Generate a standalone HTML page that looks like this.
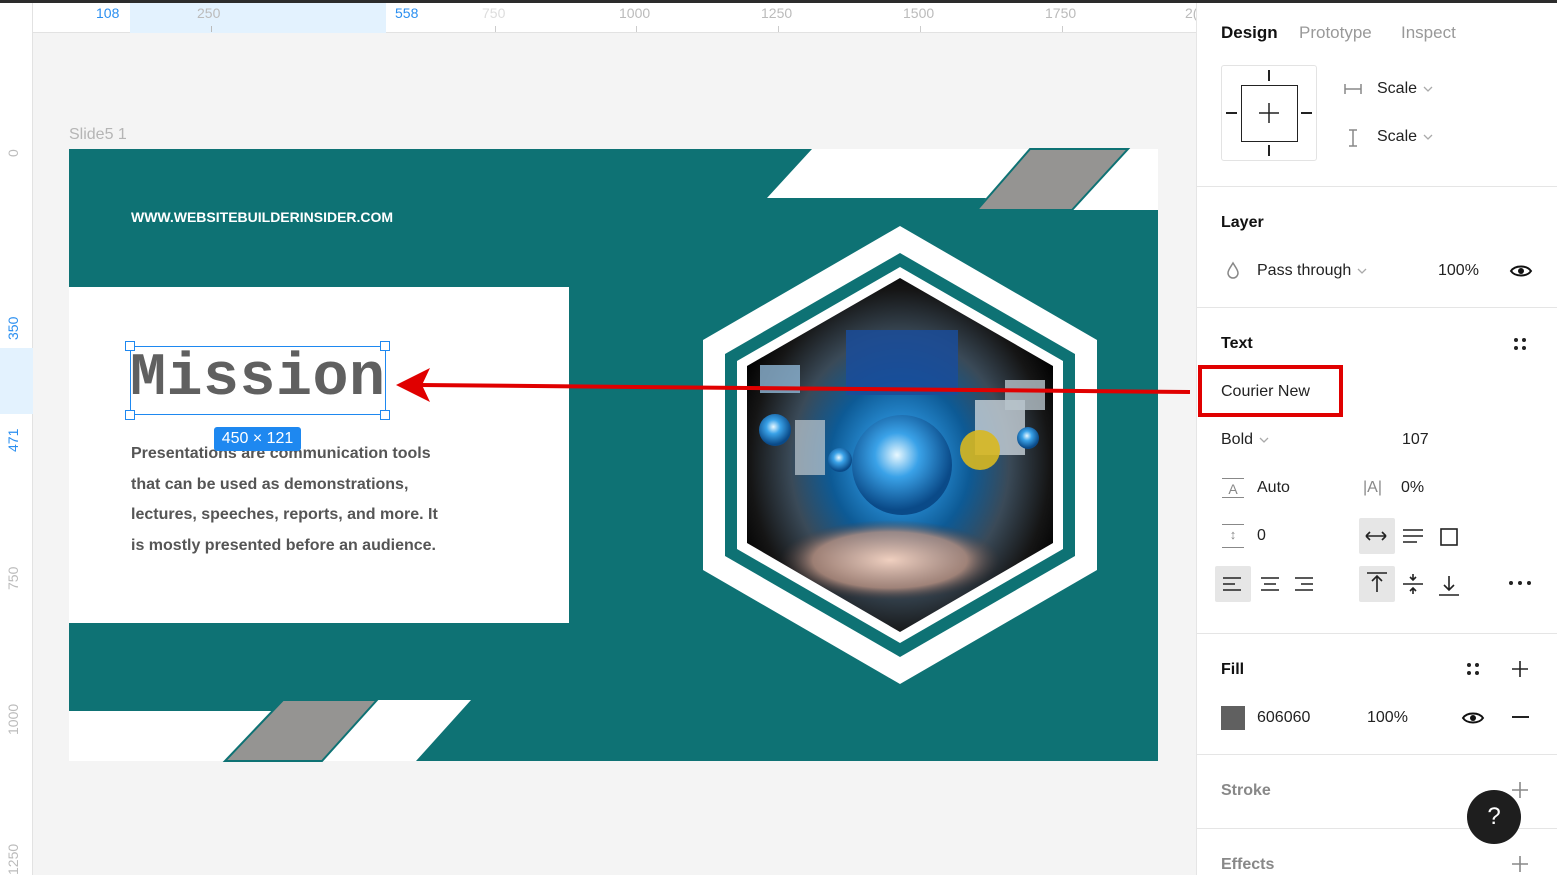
<!DOCTYPE html>
<html><head><meta charset="utf-8"><style>
*{margin:0;padding:0;box-sizing:border-box}
body{width:1557px;height:875px;overflow:hidden;background:#f4f4f4;font-family:"Liberation Sans",sans-serif;position:relative}
.a{position:absolute;white-space:nowrap}
.p{font-size:16px;color:#222}
.g{color:#999}
.sec{font-weight:bold;font-size:16px;color:#111}
.hr{position:absolute;left:1197px;width:360px;height:1px;background:#e5e5e5}
.rt{font-size:14px;color:#bbb}
.ch{display:inline-block;width:10px;height:8px;margin-left:6px;vertical-align:middle}
</style></head><body>
<div class="a" style="left:0;top:0;width:1557px;height:3px;background:#2c2c2c"></div>
<div class="a" style="left:0;top:3px;width:1197px;height:30px;background:#fff;border-bottom:1px solid #e2e2e2"></div>
<div class="a" style="left:130px;top:3px;width:256px;height:30px;background:#e3f2fe"></div>
<div class="a" style="left:0;top:3px;width:33px;height:872px;background:#fff;border-right:1px solid #e2e2e2"></div>
<div class="a" style="left:0;top:348px;width:33px;height:66px;background:#e3f2fe"></div>
<div class="a" style="left:32px;top:3px;width:1px;height:30px;background:#e2e2e2"></div>
<div class="a rt" style="left:96px;top:5px;color:#2b8ff0">108</div>
<div class="a rt" style="left:197px;top:5px">250</div>
<div class="a rt" style="left:395px;top:5px;color:#2b8ff0">558</div>
<div class="a rt" style="left:482px;top:5px;color:#ddd">750</div>
<div class="a rt" style="left:619px;top:5px">1000</div>
<div class="a rt" style="left:761px;top:5px">1250</div>
<div class="a rt" style="left:903px;top:5px">1500</div>
<div class="a rt" style="left:1045px;top:5px">1750</div>
<div class="a rt" style="left:1185px;top:5px">2(</div>
<div class="a" style="left:211px;top:26px;width:1px;height:6px;background:#bbb"></div>
<div class="a" style="left:495px;top:26px;width:1px;height:6px;background:#ccc"></div>
<div class="a" style="left:636px;top:26px;width:1px;height:6px;background:#ccc"></div>
<div class="a" style="left:778px;top:26px;width:1px;height:6px;background:#ccc"></div>
<div class="a" style="left:920px;top:26px;width:1px;height:6px;background:#ccc"></div>
<div class="a" style="left:1062px;top:26px;width:1px;height:6px;background:#ccc"></div>
<div class="a rt" style="left:5px;transform:rotate(-90deg);transform-origin:0 0;top:157px">0</div>
<div class="a rt" style="left:5px;top:340px;transform:rotate(-90deg);transform-origin:0 0;color:#2b8ff0">350</div>
<div class="a rt" style="left:5px;top:452px;transform:rotate(-90deg);transform-origin:0 0;color:#2b8ff0">471</div>
<div class="a rt" style="left:5px;top:590px;transform:rotate(-90deg);transform-origin:0 0">750</div>
<div class="a rt" style="left:5px;top:735px;transform:rotate(-90deg);transform-origin:0 0">1000</div>
<div class="a rt" style="left:5px;top:875px;transform:rotate(-90deg);transform-origin:0 0">1250</div>

<div class="a" style="left:69px;top:126px;font-size:16px;color:#b5b5b5">Slide5 1</div>

<svg class="a" style="left:0;top:0" width="1197" height="875">
<defs>
<radialGradient id="rg" cx="50%" cy="52%" r="55%">
<stop offset="0" stop-color="#dff4ff"/><stop offset="0.18" stop-color="#2a90d8"/><stop offset="0.4" stop-color="#0d5a95"/><stop offset="0.62" stop-color="#3a4a58"/><stop offset="0.85" stop-color="#151515"/><stop offset="1" stop-color="#000"/></radialGradient>
<radialGradient id="gl" cx="45%" cy="40%" r="55%"><stop offset="0" stop-color="#e8f8ff"/><stop offset="0.4" stop-color="#3aa2e8"/><stop offset="1" stop-color="#0a4a88"/></radialGradient>
<radialGradient id="hd" cx="50%" cy="50%" r="50%"><stop offset="0" stop-color="#f0d0c0"/><stop offset="0.7" stop-color="#b89080" stop-opacity="0.8"/><stop offset="1" stop-color="#503c38" stop-opacity="0"/></radialGradient>
<clipPath id="hc"><polygon points="900,278 1053,366 1053,543 900,632 747,543 747,366"/></clipPath>
</defs>
<rect x="69" y="149" width="1089" height="612" fill="#0e7274"/>
<polygon points="812,149 1158,149 1158,210 977,210 986,198 767,198" fill="#fff"/>
<polygon points="1030,149 1128,149 1072,210 977,210" fill="#959492" stroke="#0e7274" stroke-width="2"/>
<rect x="69" y="287" width="500" height="336" fill="#fff"/>
<polygon points="69,711 273,711 225,761 69,761" fill="#fff"/>
<polygon points="377,700 471,700 416,761 322,761" fill="#fff"/>
<polygon points="283,700 377,700 322,761 225,761" fill="#959492" stroke="#0e7274" stroke-width="2"/>
<polygon points="900,226 1097,340 1097,570 900,684 703,570 703,340" fill="#fff"/>
<polygon points="900,253 1075,354 1075,556 900,657 725,556 725,354" fill="#0e7274"/>
<polygon points="900,267 1063,361 1063,549 900,643 737,549 737,361" fill="#fff"/>
<g clip-path="url(#hc)">
<rect x="740" y="270" width="320" height="370" fill="url(#rg)"/>
<rect x="846" y="330" width="112" height="65" fill="#1a4c9a" opacity="0.85"/>
<rect x="760" y="365" width="40" height="28" fill="#8fb6d6" opacity="0.8"/>
<rect x="975" y="400" width="50" height="55" fill="#c8d2da" opacity="0.8"/>
<rect x="1005" y="380" width="40" height="30" fill="#b8c4cc" opacity="0.8"/>
<rect x="795" y="420" width="30" height="55" fill="#c0cad2" opacity="0.7"/>
<ellipse cx="890" cy="560" rx="110" ry="40" fill="url(#hd)"/>
<circle cx="902" cy="465" r="50" fill="url(#gl)"/>
<circle cx="775" cy="430" r="16" fill="url(#gl)"/>
<circle cx="840" cy="460" r="12" fill="url(#gl)"/>
<circle cx="1028" cy="438" r="11" fill="url(#gl)"/>
<circle cx="980" cy="450" r="20" fill="#d8b820" opacity="0.9"/>
</g>
<line x1="1190" y1="392" x2="420" y2="385" stroke="#e00000" stroke-width="4"/>
<polygon points="396,385 430,368 422,385 430,402" fill="#e00000"/>
</svg>
<div class="a" style="left:131px;top:209px;font-size:14px;font-weight:bold;color:#fff">WWW.WEBSITEBUILDERINSIDER.COM</div>
<div class="a" style="left:130px;top:346px;width:256px;height:69px;border:1px solid #1e88f0"></div>
<div class="a" style="left:130px;top:344px;font-family:'Liberation Mono',monospace;font-weight:bold;font-size:60px;color:#606060;letter-spacing:0.5px;line-height:70px">Mission</div>
<div class="a" style="left:125px;top:341px;width:10px;height:10px;border:1px solid #1e88f0;background:#fff"></div>
<div class="a" style="left:380px;top:341px;width:10px;height:10px;border:1px solid #1e88f0;background:#fff"></div>
<div class="a" style="left:125px;top:410px;width:10px;height:10px;border:1px solid #1e88f0;background:#fff"></div>
<div class="a" style="left:380px;top:410px;width:10px;height:10px;border:1px solid #1e88f0;background:#fff"></div>
<div class="a" style="left:131px;top:439px;font-size:16px;font-weight:bold;color:#555;line-height:30.5px">Presentations are communication tools<br>that can be used as demonstrations,<br>lectures, speeches, reports, and more. It<br>is mostly presented before an audience.</div>
<div class="a" style="left:214px;top:427px;width:87px;height:24px;background:#1e88f0;border-radius:3px;color:#fff;font-size:16px;text-align:center;line-height:24px">450 × 121</div>

<div class="a" style="left:1196px;top:3px;width:361px;height:872px;background:#fff;border-left:1px solid #e5e5e5"></div>
<div class="a sec" style="left:1221px;top:23px;font-size:17px">Design</div>
<div class="a p g" style="left:1299px;top:23px;font-size:17px">Prototype</div>
<div class="a p g" style="left:1401px;top:23px;font-size:17px">Inspect</div>
<div class="a" style="left:1221px;top:65px;width:96px;height:96px;border:1px solid #e3e3e3;border-radius:3px"></div>
<div class="a" style="left:1241px;top:85px;width:57px;height:57px;border:1px solid #222"></div>
<svg class="a" style="left:1221px;top:65px" width="96" height="96" stroke="#222" stroke-width="2"><line x1="48" y1="5" x2="48" y2="16"/><line x1="48" y1="80" x2="48" y2="91"/><line x1="5" y1="48" x2="16" y2="48"/><line x1="80" y1="48" x2="91" y2="48"/><line x1="48" y1="38" x2="48" y2="58" stroke-width="1.5"/><line x1="38" y1="48" x2="58" y2="48" stroke-width="1.5"/></svg>
<svg class="a" style="left:1343px;top:80px" width="20" height="70" stroke="#888" stroke-width="1.5" fill="none"><path d="M2 4v10M18 4v10M2 9h16"/><path d="M6 50h8M10 50v16M6 66h8"/></svg>
<div class="a p" style="left:1377px;top:80px">Scale<svg class="ch" viewBox="0 0 10 8"><path d="M1 2l4 4 4-4" fill="none" stroke="#aaa" stroke-width="1.3"/></svg></div>
<div class="a p" style="left:1377px;top:128px">Scale<svg class="ch" viewBox="0 0 10 8"><path d="M1 2l4 4 4-4" fill="none" stroke="#aaa" stroke-width="1.3"/></svg></div>
<div class="hr" style="top:186px"></div>
<div class="a sec" style="left:1221px;top:214px">Layer</div>
<svg class="a" style="left:1225px;top:261px" width="16" height="18"><path d="M8 2C5 7 3 9 3 12a5 5 0 0 0 10 0c0-3-2-5-5-10z" fill="none" stroke="#888" stroke-width="1.5"/></svg>
<div class="a p" style="left:1257px;top:262px">Pass through<svg class="ch" viewBox="0 0 10 8"><path d="M1 2l4 4 4-4" fill="none" stroke="#aaa" stroke-width="1.3"/></svg></div>
<div class="a p" style="left:1438px;top:262px">100%</div>
<svg class="a" style="left:1509px;top:262px" width="24" height="18"><path d="M2 9C6 3 18 3 22 9C18 15 6 15 2 9z" fill="none" stroke="#111" stroke-width="2"/><circle cx="12" cy="9" r="3" fill="#111"/></svg>
<div class="hr" style="top:307px"></div>
<div class="a sec" style="left:1221px;top:335px">Text</div>
<svg class="a" style="left:1512px;top:336px" width="16" height="16" fill="#222"><circle cx="4" cy="4" r="2"/><circle cx="12" cy="4" r="2"/><circle cx="4" cy="12" r="2"/><circle cx="12" cy="12" r="2"/></svg>
<div class="a" style="left:1198px;top:365px;width:145px;height:52px;border:4px solid #e00000"></div>
<div class="a p" style="left:1221px;top:383px">Courier New</div>
<div class="a p" style="left:1221px;top:431px">Bold<svg class="ch" viewBox="0 0 10 8"><path d="M1 2l4 4 4-4" fill="none" stroke="#aaa" stroke-width="1.3"/></svg></div>
<div class="a p" style="left:1402px;top:431px">107</div>
<div class="a" style="left:1222px;top:478px;width:22px;height:20px;border-top:1px solid #888;border-bottom:1px solid #888;font-size:14px;color:#888;text-align:center;line-height:20px">A</div>
<div class="a p" style="left:1257px;top:479px">Auto</div>
<div class="a" style="left:1363px;top:479px;font-size:16px;color:#888">|A|</div>
<div class="a p" style="left:1401px;top:479px">0%</div>
<div class="a" style="left:1222px;top:524px;width:22px;height:24px;border-top:1px solid #888;border-bottom:1px solid #888;font-size:13px;color:#888;text-align:center;line-height:20px">↕</div>
<div class="a p" style="left:1257px;top:527px">0</div>
<div class="a" style="left:1359px;top:518px;width:36px;height:36px;background:#e6e6e6;border-radius:2px"></div>
<div class="a" style="left:1215px;top:566px;width:36px;height:36px;background:#e6e6e6;border-radius:2px"></div>
<div class="a" style="left:1359px;top:566px;width:36px;height:36px;background:#e6e6e6;border-radius:2px"></div>
<svg class="a" style="left:1197px;top:510px" width="360" height="100" stroke="#222" stroke-width="1.6" fill="none">
<path d="M169 26h20M169 26l4-4M169 26l4 4M189 26l-4-4M189 26l-4 4"/>
<path d="M206 20h20M206 26h20M206 32h14"/>
<rect x="244" y="19" width="16" height="16"/>
<path d="M26 68h18M26 74h12M26 80h18"/>
<path d="M64 68h18M67 74h12M64 80h18"/>
<path d="M98 68h18M104 74h12M98 80h18"/>
<path d="M170 63h20M180 66v16M175 71l5-5 5 5"/>
<path d="M206 74h20M216 64v6M213 67l3 3 3-3M216 84v-6M213 81l3-3 3 3"/>
<path d="M242 85h20M252 66v14M247 75l5 5 5-5"/>
</svg>
<svg class="a" style="left:1508px;top:578px" width="26" height="10" fill="#222"><circle cx="3" cy="5" r="2"/><circle cx="12" cy="5" r="2"/><circle cx="21" cy="5" r="2"/></svg>
<div class="hr" style="top:633px"></div>
<div class="a sec" style="left:1221px;top:661px">Fill</div>
<svg class="a" style="left:1465px;top:661px" width="16" height="16" fill="#222"><circle cx="4" cy="4" r="2"/><circle cx="12" cy="4" r="2"/><circle cx="4" cy="12" r="2"/><circle cx="12" cy="12" r="2"/></svg>
<svg class="a" style="left:1511px;top:660px" width="18" height="18" stroke="#222" stroke-width="1.6"><path d="M9 1v16M1 9h16"/></svg>
<div class="a" style="left:1221px;top:706px;width:24px;height:24px;background:#606060"></div>
<div class="a p" style="left:1257px;top:709px">606060</div>
<div class="a p" style="left:1367px;top:709px">100%</div>
<svg class="a" style="left:1461px;top:709px" width="24" height="18"><path d="M2 9C6 3 18 3 22 9C18 15 6 15 2 9z" fill="none" stroke="#111" stroke-width="2"/><circle cx="12" cy="9" r="3" fill="#111"/></svg>
<div class="a" style="left:1512px;top:716px;width:17px;height:2px;background:#222"></div>
<div class="hr" style="top:754px"></div>
<div class="a sec" style="left:1221px;top:782px;color:#888">Stroke</div>
<svg class="a" style="left:1511px;top:781px" width="18" height="18" stroke="#888" stroke-width="1.6"><path d="M9 1v16M1 9h16"/></svg>
<div class="hr" style="top:828px"></div>
<div class="a sec" style="left:1221px;top:856px;color:#888">Effects</div>
<svg class="a" style="left:1511px;top:855px" width="18" height="18" stroke="#888" stroke-width="1.6"><path d="M9 1v16M1 9h16"/></svg>
<div class="a" style="left:1467px;top:790px;width:54px;height:54px;border-radius:50%;background:#1e1e1e;color:#fff;font-size:24px;text-align:center;line-height:54px">?</div>
</body></html>
